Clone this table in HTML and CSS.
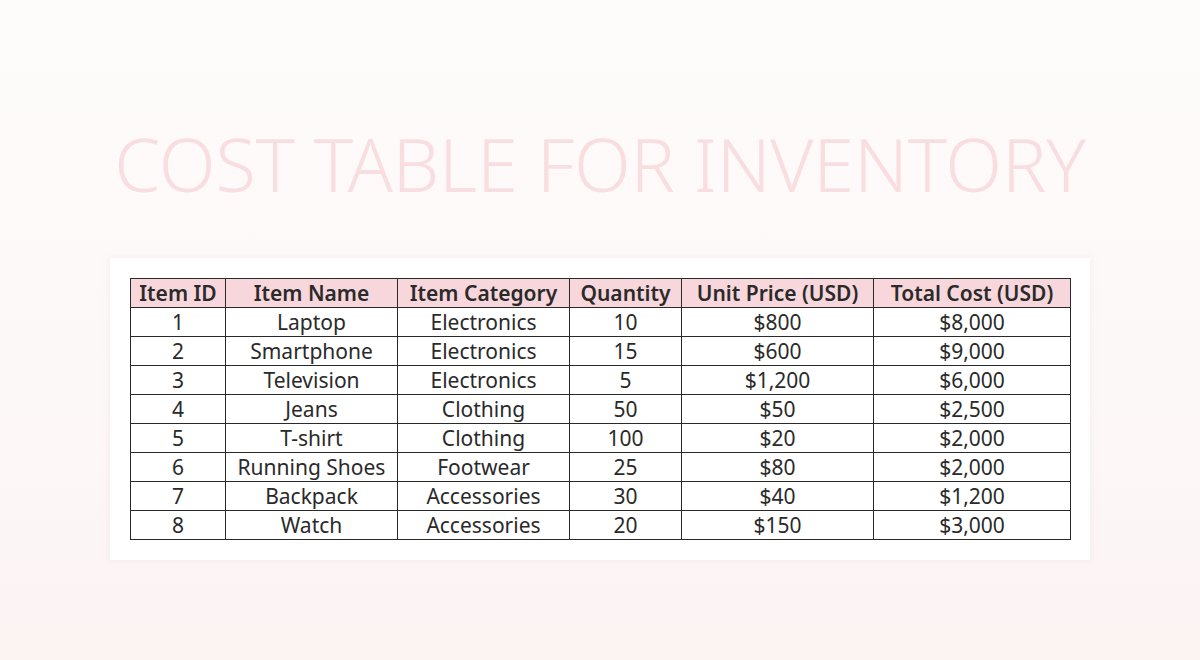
FILE: index.html
```html
<!DOCTYPE html>
<html>
<head>
<meta charset="utf-8">
<link rel="stylesheet" href="styles.css">
</head>
<body>
<div class="page">
  <h1 class="title">COST TABLE FOR INVENTORY</h1>
  <div class="card">
    <table class="cost">
      <colgroup>
        <col class="c1"><col class="c2"><col class="c3"><col class="c4"><col class="c5"><col class="c6">
      </colgroup>
      <thead>
        <tr><th>Item ID</th><th>Item Name</th><th>Item Category</th><th>Quantity</th><th>Unit Price (USD)</th><th>Total Cost (USD)</th></tr>
      </thead>
      <tbody>
        <tr><td>1</td><td>Laptop</td><td>Electronics</td><td>10</td><td>$800</td><td>$8,000</td></tr>
        <tr><td>2</td><td>Smartphone</td><td>Electronics</td><td>15</td><td>$600</td><td>$9,000</td></tr>
        <tr><td>3</td><td>Television</td><td>Electronics</td><td>5</td><td>$1,200</td><td>$6,000</td></tr>
        <tr><td>4</td><td>Jeans</td><td>Clothing</td><td>50</td><td>$50</td><td>$2,500</td></tr>
        <tr><td>5</td><td>T-shirt</td><td>Clothing</td><td>100</td><td>$20</td><td>$2,000</td></tr>
        <tr><td>6</td><td>Running Shoes</td><td>Footwear</td><td>25</td><td>$80</td><td>$2,000</td></tr>
        <tr><td>7</td><td>Backpack</td><td>Accessories</td><td>30</td><td>$40</td><td>$1,200</td></tr>
        <tr><td>8</td><td>Watch</td><td>Accessories</td><td>20</td><td>$150</td><td>$3,000</td></tr>
      </tbody>
    </table>
  </div>
</div>
</body>
</html>
```
FILE: styles.css
```css
html, body {
  margin: 0;
  padding: 0;
}
body {
  width: 1200px;
  height: 660px;
  overflow: hidden;
  background: linear-gradient(180deg, #fefbfb 0%, #fdf8f8 60%, #fcf3f3 100%);
  font-family: "Noto Sans", "Open Sans", sans-serif;
}
.page {
  display: flex;
  flex-direction: column;
  align-items: center;
}
.title {
  margin: 121px 0 0 0;
  height: 86px;
  line-height: 86px;
  font-size: 74px;
  font-weight: 300;
  color: #f9dee1;
  letter-spacing: -0.2px;
  white-space: nowrap;
}
.card {
  margin-top: 51px;
  width: 940px;
  padding: 20px;
  background: #ffffff;
  box-shadow: 0 0 6px rgba(240, 220, 220, 0.5);
}
.cost {
  width: 940px;
  border-collapse: collapse;
  table-layout: fixed;
  font-size: 21px;
  color: #2a2a2a;
}
.c1 { width: 95px; }
.c2 { width: 172px; }
.c3 { width: 172px; }
.c4 { width: 112px; }
.c5 { width: 192px; }
.c6 { width: 197px; }
.cost th, .cost td {
  border: 1px solid #2a2a2a;
  height: 28px;
  padding: 0;
  text-align: center;
  line-height: 28px;
  white-space: nowrap;
}
.cost th {
  background: #f8d7dc;
  font-weight: 600;
}
.cost td {
  font-weight: 400;
}
```
